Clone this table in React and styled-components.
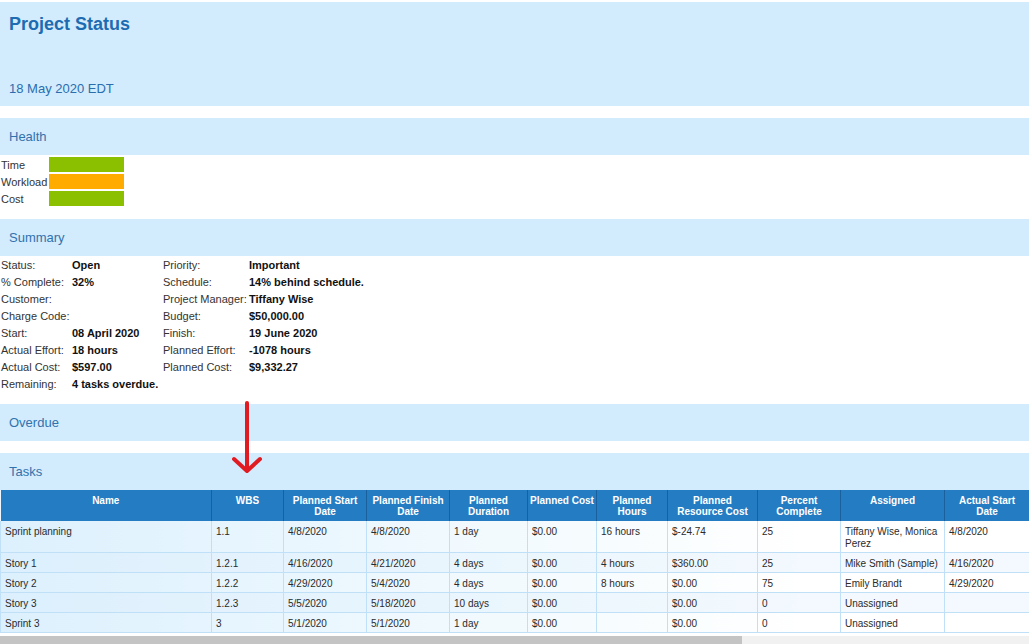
import React from 'react';
import styled, { createGlobalStyle } from 'styled-components';

const GlobalStyle = createGlobalStyle`
  html, body {
    margin: 0;
    padding: 0;
    overflow: hidden;
    background: #ffffff;
  }
  body {
    font-family: "Liberation Sans", Arial, sans-serif;
    color: #333333;
  }
`;

const Page = styled.div`
  position: relative;
  width: 1029px;
  padding-top: 2px;
`;

const HeaderPanel = styled.header`
  display: flex;
  flex-direction: column;
  justify-content: space-between;
  height: 104px;
  box-sizing: border-box;
  padding: 12px 9px 10px;
  background: #d2ebfd;
`;

const Title = styled.h1`
  margin: 0;
  font-size: 18px;
  font-weight: bold;
  color: #1d6cb1;
`;

const DateLine = styled.div`
  font-size: 13px;
  color: #2a6eae;
`;

const Section = styled.section`
  margin-top: ${(p) => p.$gap}px;
`;

const SectionBar = styled.div`
  display: flex;
  align-items: center;
  height: 37px;
  padding-left: 9px;
  background: #d2ebfd;
  font-size: 13px;
  color: #3172ad;
`;

const HealthGrid = styled.div`
  display: grid;
  grid-template-columns: 49px 75px;
  row-gap: 2px;
  padding-top: 2px;
  font-size: 11px;
  align-items: center;
`;

const HealthBar = styled.div`
  height: 15px;
  background: ${(p) => p.$color};
`;

const SummaryGrid = styled.div`
  display: grid;
  grid-template-columns: 72px 90px 87px auto;
  grid-auto-rows: 17px;
  align-items: center;
  font-size: 11px;
`;

const Label = styled.span`
  padding-left: 1px;
  color: #333333;
  white-space: nowrap;
`;

const Value = styled.span`
  font-weight: bold;
  color: #111111;
  white-space: nowrap;
`;

const TableViewport = styled.div`
  width: 1029px;
  overflow: hidden;
`;

const Table = styled.table`
  width: 1029px;
  border-collapse: collapse;
  table-layout: fixed;
  font-size: 10px;
  background: linear-gradient(to right, #dcf0fd 0px, #eef8fe 400px, #ffffff 800px);
`;

const HeadCell = styled.th`
  width: ${(p) => p.$w}px;
  height: 31px;
  box-sizing: border-box;
  padding: 5px 2px 3px;
  background: #247cc2;
  color: #ffffff;
  font-weight: bold;
  line-height: 11px;
  text-align: center;
  vertical-align: top;
  border-right: 1px solid #1a609c;
`;

const Row = styled.tr`
  background: ${(p) => (p.$alt ? 'rgba(220, 238, 252, 0.35)' : 'transparent')};
`;

const Cell = styled.td`
  padding: 5px 4px 2px;
  line-height: 12px;
  vertical-align: top;
  color: #2b2b2b;
  border: 1px solid #bfe0f6;
  border-top: none;
`;

const ScrollTrack = styled.div`
  width: 1029px;
  height: 9px;
  margin-top: 3px;
  background: #f1f1f1;
`;

const ScrollThumb = styled.div`
  width: 742px;
  height: 100%;
  background: #c4c4c4;
`;

const ArrowMark = styled.svg`
  position: absolute;
  left: 228px;
  top: 398px;
`;

const columns = [
  { title: 'Name', w: 211 },
  { title: 'WBS', w: 72 },
  { title: 'Planned Start Date', w: 83 },
  { title: 'Planned Finish Date', w: 83 },
  { title: 'Planned Duration', w: 78 },
  { title: 'Planned Cost', w: 69 },
  { title: 'Planned Hours', w: 71 },
  { title: 'Planned Resource Cost', w: 90 },
  { title: 'Percent Complete', w: 83 },
  { title: 'Assigned', w: 104 },
  { title: 'Actual Start Date', w: 85 },
];

const tasks = [
  ['Sprint planning', '1.1', '4/8/2020', '4/8/2020', '1 day', '$0.00', '16 hours', '$-24.74', '25', 'Tiffany Wise, Monica Perez', '4/8/2020'],
  ['Story 1', '1.2.1', '4/16/2020', '4/21/2020', '4 days', '$0.00', '4 hours', '$360.00', '25', 'Mike Smith (Sample)', '4/16/2020'],
  ['Story 2', '1.2.2', '4/29/2020', '5/4/2020', '4 days', '$0.00', '8 hours', '$0.00', '75', 'Emily Brandt', '4/29/2020'],
  ['Story 3', '1.2.3', '5/5/2020', '5/18/2020', '10 days', '$0.00', '', '$0.00', '0', 'Unassigned', ''],
  ['Sprint 3', '3', '5/1/2020', '5/1/2020', '1 day', '$0.00', '', '$0.00', '0', 'Unassigned', ''],
];

const health = [
  { label: 'Time', color: '#8bc000' },
  { label: 'Workload', color: '#ffab00' },
  { label: 'Cost', color: '#8bc000' },
];

const summary = [
  ['Status:', 'Open', 'Priority:', 'Important'],
  ['% Complete:', '32%', 'Schedule:', '14% behind schedule.'],
  ['Customer:', '', 'Project Manager:', 'Tiffany Wise'],
  ['Charge Code:', '', 'Budget:', '$50,000.00'],
  ['Start:', '08 April 2020', 'Finish:', '19 June 2020'],
  ['Actual Effort:', '18 hours', 'Planned Effort:', '-1078 hours'],
  ['Actual Cost:', '$597.00', 'Planned Cost:', '$9,332.27'],
  ['Remaining:', '4 tasks overdue.', '', ''],
];

const App = () => {
  return (
    <Page>
      <GlobalStyle />
      <HeaderPanel>
        <Title>Project Status</Title>
        <DateLine>18 May 2020 EDT</DateLine>
      </HeaderPanel>

      <Section $gap={12}>
        <SectionBar>Health</SectionBar>
        <HealthGrid>
          {health.map((h) => (
            <React.Fragment key={h.label}>
              <Label>{h.label}</Label>
              <HealthBar $color={h.color} />
            </React.Fragment>
          ))}
        </HealthGrid>
      </Section>

      <Section $gap={13}>
        <SectionBar>Summary</SectionBar>
        <SummaryGrid>
          {summary.map((r, i) => (
            <React.Fragment key={i}>
              <Label>{r[0]}</Label>
              <Value>{r[1]}</Value>
              <Label>{r[2]}</Label>
              <Value>{r[3]}</Value>
            </React.Fragment>
          ))}
        </SummaryGrid>
      </Section>

      <Section $gap={12}>
        <SectionBar>Overdue</SectionBar>
      </Section>

      <Section $gap={12}>
        <SectionBar>Tasks</SectionBar>
        <TableViewport>
          <Table>
            <thead>
              <tr>
                {columns.map((c) => (
                  <HeadCell key={c.title} $w={c.w}>{c.title}</HeadCell>
                ))}
              </tr>
            </thead>
            <tbody>
              {tasks.map((t, i) => (
                <Row key={t[0]} $alt={i % 2 === 1}>
                  {t.map((v, j) => (
                    <Cell key={j}>{v}</Cell>
                  ))}
                </Row>
              ))}
            </tbody>
          </Table>
        </TableViewport>
        <ScrollTrack>
          <ScrollThumb />
        </ScrollTrack>
      </Section>

      <ArrowMark width="40" height="80" viewBox="0 0 40 80">
        <g stroke="#e11b22" strokeWidth="4" strokeLinecap="round" strokeLinejoin="round" fill="none">
          <line x1="19" y1="5" x2="19" y2="72" />
          <polyline points="6,61 19,73 32,61" />
        </g>
      </ArrowMark>
    </Page>
  );
};

export default App;
